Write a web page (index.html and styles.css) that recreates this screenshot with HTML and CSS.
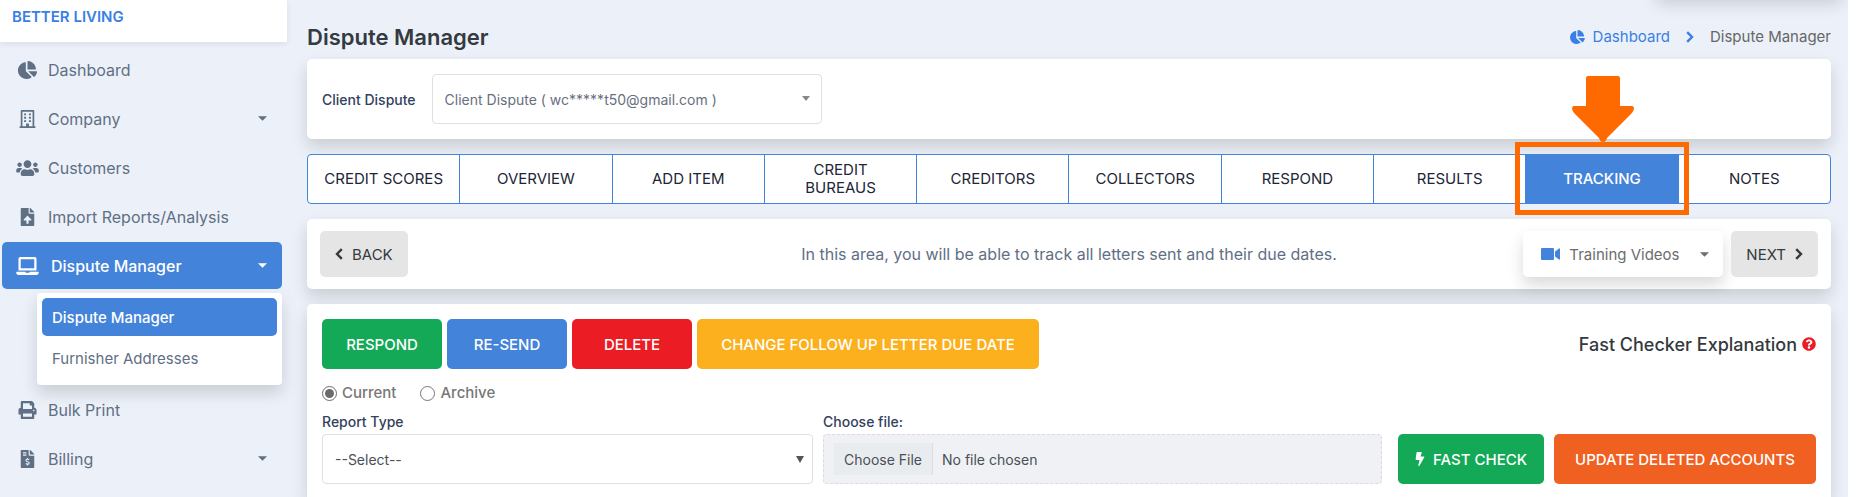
FILE: index.html
```html
<!DOCTYPE html>
<html lang="en">
<head>
  <meta charset="UTF-8" />
  <meta name="viewport" content="width=device-width, initial-scale=1.0"/>
  <title>Dispute Manager</title>
  <link rel="stylesheet" href="styles.css">
</head>
<body>
  <svg class="sprite" aria-hidden="true">
    <symbol id="pie" viewBox="0 0 544 512"><path d="M527.79 288H290.5l158.03 158.03c6.04 6.04 15.98 6.53 22.19.68 38.7-36.46 65.32-85.61 73.13-140.86 1.34-9.46-6.51-17.85-16.06-17.85zm-15.83-64.8C503.72 103.74 408.26 8.28 288.8.04 279.68-.59 272 7.1 272 16.24V240h223.77c9.14 0 16.82-7.68 16.19-16.8zM224 288V50.71c0-9.55-8.39-17.4-17.84-16.06C86.99 51.49-4.1 155.6.14 280.37 4.5 408.51 114.83 513.59 243.03 511.98c50.4-.63 96.97-16.87 135.26-44.03 7.9-5.6 8.42-17.23 1.57-24.08L224 288z"/></symbol>
    <symbol id="building" viewBox="0 0 448 512"><path fill-rule="evenodd" d="M32 24c0-13 11-24 24-24h336c13 0 24 11 24 24v440h20c7 0 12 5 12 12v36H0v-36c0-7 5-12 12-12h20V24zm48 24v416h104v-68c0-7 5-12 12-12h56c7 0 12 5 12 12v68h104V48H80z"/><path d="M128 96h56v56h-56zm136 0h56v56h-56zM128 192h56v56h-56zm136 0h56v56h-56zM128 288h56v56h-56zm136 0h56v56h-56z"/></symbol>
    <symbol id="users" viewBox="0 0 640 512"><path d="M96 224c35.3 0 64-28.7 64-64s-28.7-64-64-64-64 28.7-64 64 28.7 64 64 64zm448 0c35.3 0 64-28.7 64-64s-28.7-64-64-64-64 28.7-64 64 28.7 64 64 64zm32 32h-64c-17.6 0-33.5 7.1-45.1 18.6 40.3 22.1 68.9 62 75.1 109.4h66c17.7 0 32-14.3 32-32v-32c0-35.3-28.7-64-64-64zm-256 0c61.9 0 112-50.1 112-112S381.9 32 320 32 208 82.1 208 144s50.1 112 112 112zm76.8 32h-8.3c-20.8 10-43.9 16-68.5 16s-47.6-6-68.5-16h-8.3C179.6 288 128 339.6 128 403.2V432c0 26.5 21.5 48 48 48h288c26.5 0 48-21.5 48-48v-28.8c0-63.6-51.6-115.2-115.2-115.2zm-223.7-13.4C161.5 263.1 145.6 256 128 256H64c-35.3 0-64 28.7-64 64v32c0 17.7 14.3 32 32 32h65.9c6.3-47.4 34.9-87.3 75.2-109.4z"/></symbol>
    <symbol id="file-up" viewBox="0 0 384 512"><path d="M224 136V0H24C10.7 0 0 10.7 0 24v464c0 13.3 10.7 24 24 24h336c13.3 0 24-10.7 24-24V160H248c-13.2 0-24-10.8-24-24zm65.18 216.01H224v80c0 8.84-7.16 16-16 16h-32c-8.84 0-16-7.16-16-16v-80H94.82c-14.28 0-21.41-17.29-11.27-27.36l96.42-95.7c6.65-6.61 17.39-6.61 24.04 0l96.42 95.7c10.15 10.07 3.03 27.36-11.25 27.36zM377 105L279.1 7c-4.5-4.5-10.6-7-17-7H256v128h128v-6.1c0-6.3-2.5-12.4-7-16.9z"/></symbol>
    <symbol id="laptop" viewBox="0 0 640 512"><path d="M624 416H381.54c-.74 19.81-14.71 32-32.74 32H288c-18.69 0-33.02-17.47-32.77-32H16c-8.8 0-16 7.2-16 16v16c0 35.2 28.8 64 64 64h512c35.2 0 64-28.8 64-64v-16c0-8.8-7.2-16-16-16zM576 48c0-26.4-21.6-48-48-48H112C85.6 0 64 21.6 64 48v336h512V48zm-64 272H128V64h384v256z"/></symbol>
    <symbol id="print" viewBox="0 0 512 512"><path d="M448 192V77.25c0-8.49-3.37-16.62-9.37-22.63L393.37 9.37c-6-6-14.14-9.37-22.63-9.37H96C78.33 0 64 14.33 64 32v160c-35.35 0-64 28.65-64 64v112c0 8.84 7.16 16 16 16h48v96c0 17.67 14.33 32 32 32h320c17.67 0 32-14.33 32-32v-96h48c8.84 0 16-7.16 16-16V256c0-35.35-28.65-64-64-64zm-64 256H128v-96h256v96zm0-224H128V64h192v48c0 8.84 7.16 16 16 16h48v96zm48 72c-13.25 0-24-10.75-24-24 0-13.26 10.75-24 24-24s24 10.74 24 24c0 13.25-10.75 24-24 24z"/></symbol>
    <symbol id="invoice" viewBox="0 0 384 512"><path d="M224 136V0H24C10.7 0 0 10.7 0 24v464c0 13.3 10.7 24 24 24h336c13.3 0 24-10.7 24-24V160H248c-13.2 0-24-10.8-24-24zM377 105L279.1 7c-4.5-4.5-10.6-7-17-7H256v128h128v-6.1c0-6.3-2.5-12.4-7-16.9z"/><path fill="none" stroke="#ecf1f9" stroke-width="32" d="M64 80h96M64 144h96M240 278c-24-22-92-22-92 18 0 48 92 24 92 72 0 40-70 42-96 16M192 224v36M192 400v40"/></symbol>
    <symbol id="video" viewBox="0 0 20 14"><path d="M1 1h11q1 0 1 1v10q0 1-1 1H1q-1 0-1-1V2q0-1 1-1zM18 1.500q1-.5 1 .5v10q0 1-1 .5l-4-3v-5z"/></symbol>
    <symbol id="bolt" viewBox="0 0 320 512"><path d="M296 160H180.6l42.6-129.8C227.2 15 215.7 0 200 0H56C44 0 33.8 8.9 32.2 20.8l-32 240C-1.7 275.2 9.5 288 24 288h118.7L96.6 482.5c-3.6 15.2 8 29.5 23.3 29.5 8.4 0 16.400-4.4 20.8-12l176-304c9.3-15.900-2.2-36-20.7-36z"/></symbol>
    <symbol id="question" viewBox="0 0 512 512"><path d="M504 256c0 136.997-111.043 248-248 248S8 392.997 8 256C8 119.083 119.043 8 256 8s248 111.083 248 248zM262.655 90c-54.497 0-89.255 22.957-116.549 63.758-3.536 5.286-2.353 12.415 2.715 16.258l34.699 26.31c5.205 3.947 12.621 3.008 16.665-2.122 17.864-22.658 30.113-35.797 57.303-35.797 20.429 0 45.698 13.148 45.698 32.958 0 14.976-12.363 22.667-32.534 33.976C247.128 238.528 216 254.941 216 296v4c0 6.627 5.373 12 12 12h56c6.627 0 12-5.373 12-12v-1.333c0-28.462 83.186-29.647 83.186-106.667 0-58.002-60.165-102-116.531-102zM256 338c-25.365 0-46 20.635-46 46 0 25.364 20.635 46 46 46s46-20.636 46-46c0-25.364-20.635-46-46-46z"/></symbol>
    <symbol id="chevron" viewBox="0 0 8 12"><path fill="none" stroke="currentColor" stroke-width="2.400" d="M1.200 1.200L6 6l-4.800 4.800"/></symbol>
    <symbol id="caret" viewBox="0 0 8 4"><path d="M0 0h8L4 4z"/></symbol>
    <symbol id="triangle" viewBox="0 0 8 7"><path d="M0 0h8L4 7z"/></symbol>
    <symbol id="triangle-flat" viewBox="0 0 8 5"><path d="M0 0h8L4 5z"/></symbol>
  </svg>

  <div class="app">
    <aside class="sidebar">
      <a class="brand" href="#">BETTER LIVING</a>
      <nav class="menu">
        <a class="menu-item" href="#"><svg class="menu-icon"><use href="#pie"/></svg>Dashboard</a>
        <a class="menu-item" href="#"><svg class="menu-icon"><use href="#building"/></svg>Company<svg class="caret"><use href="#caret"/></svg></a>
        <a class="menu-item" href="#"><svg class="menu-icon"><use href="#users"/></svg>Customers</a>
        <a class="menu-item" href="#"><svg class="menu-icon"><use href="#file-up"/></svg>Import Reports/Analysis</a>
        <a class="menu-item active" href="#"><svg class="menu-icon"><use href="#laptop"/></svg>Dispute Manager<svg class="caret"><use href="#caret"/></svg></a>
        <div class="submenu">
          <a class="submenu-item active" href="#">Dispute Manager</a>
          <a class="submenu-item" href="#">Furnisher Addresses</a>
        </div>
        <a class="menu-item" href="#"><svg class="menu-icon"><use href="#print"/></svg>Bulk Print</a>
        <a class="menu-item" href="#"><svg class="menu-icon"><use href="#invoice"/></svg>Billing<svg class="caret"><use href="#caret"/></svg></a>
      </nav>
    </aside>

    <main class="content">
      <header class="page-head">
        <h1>Dispute Manager</h1>
        <nav class="breadcrumb">
          <a href="#"><svg class="crumb-icon"><use href="#pie"/></svg>Dashboard</a>
          <svg class="chevron"><use href="#chevron"/></svg>
          <span>Dispute Manager</span>
        </nav>
      </header>

      <section class="card client-card">
        <label for="client">Client Dispute</label>
        <div class="select-wrap client-select">
          <select id="client"><option>Client Dispute ( wc*****t50@gmail.com )</option></select>
          <svg class="select-arrow"><use href="#triangle-flat"/></svg>
        </div>
      </section>

      <nav class="tabs">
        <a href="#">CREDIT SCORES</a>
        <a href="#">OVERVIEW</a>
        <a href="#">ADD ITEM</a>
        <a href="#">CREDIT BUREAUS</a>
        <a href="#">CREDITORS</a>
        <a href="#">COLLECTORS</a>
        <a href="#">RESPOND</a>
        <a href="#">RESULTS</a>
        <a class="active" href="#">TRACKING
          <span class="marker"></span>
          <svg class="marker-arrow" viewBox="0 0 62 67"><path d="M16 0h30q2 0 2 2v28h12q2 0 2 3-1 3-3 5L35 62q-1 4-4 4t-4-4L3 38q-2-2-3-5 0-3 2-3h12V2q0-2 2-2z"/></svg>
        </a>
        <a href="#">NOTES</a>
      </nav>

      <section class="card step-card">
        <button type="button" class="btn btn-grey"><svg class="chevron back"><use href="#chevron"/></svg>BACK</button>
        <p>In this area, you will be able to track all letters sent and their due dates.</p>
        <div class="step-right">
          <button type="button" class="btn btn-video"><svg class="video-icon"><use href="#video"/></svg>Training Videos<svg class="caret"><use href="#caret"/></svg></button>
          <button type="button" class="btn btn-grey">NEXT<svg class="chevron"><use href="#chevron"/></svg></button>
        </div>
      </section>

      <section class="card tracking-card">
        <div class="actions">
          <button type="button" class="btn green">RESPOND</button>
          <button type="button" class="btn blue">RE-SEND</button>
          <button type="button" class="btn red">DELETE</button>
          <button type="button" class="btn yellow">CHANGE FOLLOW UP LETTER DUE DATE</button>
          <a class="explanation" href="#">Fast Checker Explanation<svg class="help"><use href="#question"/></svg></a>
        </div>

        <div class="radios">
          <label><input type="radio" name="status" checked> Current</label>
          <label><input type="radio" name="status"> Archive</label>
        </div>

        <div class="form-row">
          <div class="field report-field">
            <label for="report">Report Type</label>
            <div class="select-wrap">
              <select id="report"><option>--Select--</option></select>
              <svg class="select-arrow"><use href="#triangle"/></svg>
            </div>
          </div>
          <div class="field file-field">
            <label for="file">Choose file:</label>
            <input type="file" id="file">
          </div>
          <div class="form-buttons">
            <button type="button" class="btn green"><svg class="bolt"><use href="#bolt"/></svg>FAST CHECK</button>
            <button type="button" class="btn orange">UPDATE DELETED ACCOUNTS</button>
          </div>
        </div>
      </section>
    </main>
  </div>
</body>
</html>
```
FILE: styles.css
```css
* {
  box-sizing: border-box;
}
body {
  margin: 0;
  background: #fff;
  font-family: Inter, "Open Sans", sans-serif;
  font-size: 15px;
  color: #5f6f84;
}
a {
  color: inherit;
  text-decoration: none;
}
svg {
  fill: currentColor;
  flex: none;
}
.sprite {
  display: none;
}
.app {
  position: relative;
  display: flex;
  min-height: 100vh;
  margin-right: 14px;
  background: #ecf1f9;
  overflow: hidden;
}
/* shadow of the user bar that sits above the page */
.app::after {
  content: "";
  position: absolute;
  top: -24px;
  right: 6px;
  width: 186px;
  height: 20px;
  border-radius: 5px;
  box-shadow: 0 8px 16px rgba(0,0,0,0.15);
}

/* sidebar */
.sidebar {
  flex: none;
  width: 287px;
}
.brand {
  display: block;
  height: 42px;
  padding: 7px 12px;
  background: #fff;
  box-shadow: 0 2px 6px rgba(0,0,0,0.08);
  color: #3a80e4;
  font-size: 15px;
  font-weight: 600;
  line-height: 20px;
}
.menu {
  padding: 4px 5px 0 2px;
}
.menu-item {
  display: flex;
  align-items: center;
  height: 47px;
  margin-bottom: 2px;
  padding: 0 15px 0 14px;
  border-radius: 5px;
  font-size: 16px;
}
.menu-icon {
  width: 23px;
  height: 18px;
  margin-right: 9px;
}
.caret {
  width: 9px;
  height: 5px;
  margin-left: auto;
}
.menu-item.active,
.submenu-item.active {
  background: #4483da;
  color: #fff;
  font-weight: 500;
}
.menu-item.active .menu-icon {
  margin-right: 12px;
}
.submenu {
  margin: 4px 0 1px 35px;
  padding: 5px;
  background: #fff;
  border-radius: 4px;
  box-shadow: 0 8px 16px rgba(0,0,0,0.15);
}
.submenu-item {
  display: flex;
  align-items: center;
  height: 38px;
  margin-bottom: 3px;
  padding: 0 10px;
  border-radius: 5px;
  font-size: 15px;
}

/* content */
.content {
  flex: 1;
  display: flex;
  flex-direction: column;
  gap: 15px;
  padding: 0 17px 0 20px;
}
.page-head {
  display: flex;
  align-items: flex-end;
  justify-content: space-between;
  height: 59px;
  margin-bottom: -15px;
  padding-bottom: 8px;
}
h1 {
  margin: 0;
  color: #343a40;
  font-size: 22px;
  font-weight: 600;
  line-height: 28px;
}
.breadcrumb {
  display: flex;
  align-items: center;
  gap: 16px;
  line-height: 28px;
  color: #666;
}
.breadcrumb a {
  display: flex;
  align-items: center;
  gap: 8px;
  color: #3a80e4;
}
.breadcrumb .chevron {
  color: #3a80e4;
}
.crumb-icon {
  width: 15px;
  height: 14px;
}
.chevron {
  width: 8px;
  height: 12px;
}
.chevron.back {
  transform: rotate(180deg);
}
.card {
  background: #fff;
  border-radius: 5px;
  box-shadow: 0 8px 16px rgba(0,0,0,0.15);
}
.client-card {
  display: flex;
  align-items: center;
  gap: 16px;
  padding: 15px;
}
.client-card label,
.field label {
  color: #33415c;
  font-size: 14px;
  font-weight: 500;
}
.select-wrap {
  position: relative;
}
.client-select {
  width: 390px;
}
select {
  appearance: none;
  width: 100%;
  height: 50px;
  padding: 0 12px;
  background: #fff;
  border: 1px solid #dfe0e2;
  border-radius: 4px;
  color: #495057;
  font-family: inherit;
  font-size: 14px;
}
.client-select select {
  color: #687080;
}
.select-arrow {
  position: absolute;
  top: 22px;
  right: 9px;
  width: 8px;
  height: 7px;
  color: #555;
  pointer-events: none;
}
.client-select .select-arrow {
  right: 12px;
  height: 5px;
  color: #888;
}

.tabs {
  position: relative;
  z-index: 1;
  display: flex;
  height: 50px;
  background: #fff;
  border: 1px solid #4483da;
  border-radius: 4px;
}
.tabs a {
  position: relative;
  flex: 1 1 0;
  display: flex;
  align-items: center;
  justify-content: center;
  padding: 0 12px;
  border-left: 1px solid #4483da;
  color: #212537;
  line-height: 18px;
  text-align: center;
}
.tabs a:first-child {
  border-left: 0;
}
.tabs a.active {
  background: #4483da;
  color: #fff;
  font-weight: 500;
}
.marker {
  position: absolute;
  top: -13px;
  bottom: -12px;
  left: -11px;
  right: -11px;
  border: 5px solid #ff6a00;
}
/* white gap between the marker and the active tab */
.tabs a.active::before,
.tabs a.active::after {
  content: "";
  position: absolute;
  top: 0;
  bottom: 0;
  width: 5px;
  background: #fff;
}
.tabs a.active::before {
  left: -6px;
}
.tabs a.active::after {
  right: -5px;
}
.marker-arrow {
  position: absolute;
  top: -79px;
  left: 46px;
  width: 62px;
  height: 67px;
  color: #ff6a00;
}

.btn {
  display: flex;
  align-items: center;
  justify-content: center;
  height: 50px;
  border: 0;
  border-radius: 5px;
  color: #fff;
  font-family: inherit;
  font-size: 15px;
  font-weight: 500;
  cursor: pointer;
}
.step-card {
  display: grid;
  grid-template-columns: 1fr auto 1fr;
  align-items: center;
  padding: 12px 13px;
}
.step-card p {
  margin: 0;
  font-size: 16px;
}
.step-card .btn {
  height: 46px;
}
.btn-grey {
  gap: 9px;
  padding: 0 15px;
  background: #e5e5e5;
  color: #343a40;
  font-weight: 400;
}
.step-card > .btn {
  justify-self: start;
}
.step-right {
  display: flex;
  justify-content: flex-end;
  gap: 8px;
}
.btn-video {
  width: 200px;
  padding: 0 14px 0 18px;
  background: #fff;
  box-shadow: 0 8px 16px rgba(0,0,0,0.15);
  color: #6c6c6c;
  font-weight: 400;
}
.video-icon {
  width: 20px;
  height: 14px;
  margin-right: 8px;
  color: #4483da;
}

.tracking-card {
  flex: 1;
  padding: 15px 15px 13px;
  border-radius: 5px 5px 0 0;
}
.actions {
  display: flex;
  align-items: center;
  gap: 5px;
}
.actions .btn {
  width: 120px;
}
.actions .yellow {
  width: 342px;
}
.green { background: #13a957; }
.blue { background: #4483da; }
.red { background: #ec1c24; }
.yellow { background: #fcb01d; }
.orange { background: #f06021; }
.explanation {
  display: flex;
  align-items: center;
  gap: 5px;
  margin-left: auto;
  color: #343a40;
  font-size: 18px;
  font-weight: 500;
}
.help {
  width: 14px;
  height: 14px;
  color: #ec1c24;
}
.radios {
  display: flex;
  gap: 24px;
  margin-top: 14px;
  color: #777;
  font-weight: 500;
  line-height: 20px;
}
.radios label {
  display: flex;
  align-items: center;
}
.radios input {
  width: 15px;
  height: 15px;
  margin: 0 5px 0 0;
  accent-color: #6b6b6b;
}
.form-row {
  display: flex;
  align-items: flex-end;
  margin-top: 9px;
}
.field label {
  display: block;
  margin-bottom: 2px;
  line-height: 20px;
}
.report-field {
  flex: 491 1 0;
  margin-right: 10px;
}
.file-field {
  flex: 559 1 0;
  margin-right: 16px;
}
input[type="file"] {
  display: block;
  width: 100%;
  height: 50px;
  padding: 8px 10px;
  background: #eff1f5;
  border: 1px dashed #d9dbdf;
  border-radius: 4px;
  color: #495057;
  font-family: inherit;
  font-size: 14px;
}
input[type="file"]::file-selector-button {
  height: 32px;
  margin-right: 9px;
  padding: 0 10px;
  background: #e9ecef;
  border: 0;
  border-right: 1px solid #dcdfe3;
  color: #495057;
  font-family: inherit;
  font-size: 14px;
}
.form-buttons {
  display: flex;
  gap: 10px;
}
.form-buttons .green {
  width: 146px;
}
.form-buttons .orange {
  width: 262px;
}
.bolt {
  width: 10px;
  height: 14px;
  margin-right: 8px;
}
```
